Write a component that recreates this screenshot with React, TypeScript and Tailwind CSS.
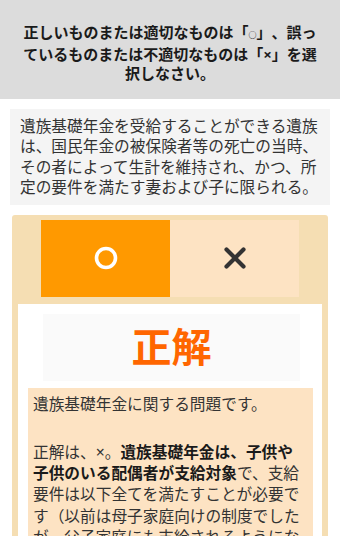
import React from 'react';

const jp = { fontFamily: '"Noto Sans", "Noto Sans CJK JP", sans-serif' };

function CircleIcon() {
  return (
    <svg width="26" height="26" viewBox="0 0 26 26">
      <circle cx="13" cy="13" r="9.5" fill="none" stroke="#fff" strokeWidth="3.6" />
    </svg>
  );
}

function CrossIcon() {
  return (
    <svg width="24" height="24" viewBox="0 0 24 24">
      <path d="M3.5 3.5 L20.5 20.5 M20.5 3.5 L3.5 20.5" stroke="#333" strokeWidth="4.2" strokeLinecap="round" />
    </svg>
  );
}

export default function App() {
  return (
    <div className="w-[340px] min-h-[536px] bg-white text-[#222] [text-spacing-trim:space-all]" style={jp}>
      {/* instruction header */}
      <div className="bg-[#dcdcdc] px-[22px] pt-[23px] pb-[15px] text-center text-[15px] font-bold leading-[19.5px] text-[#1a1a1a]">
        正しいものまたは適切なものは「<span className="text-[8px]">○</span>」、誤っているものまたは不適切なものは「×」を選択しなさい。
      </div>

      {/* question */}
      <div className="mx-[10px] mt-[10px] bg-[#f4f4f4] px-[10px] py-[7px] text-[15.7px] leading-[20.5px] text-[#333]">
        遺族基礎年金を受給することができる遺族は、国民年金の被保険者等の死亡の当時、その者によって生計を維持され、かつ、所定の要件を満たす妻および子に限られる。
      </div>

      {/* answer card */}
      <div className="mx-[12px] mt-[10px] rounded-[3px] bg-[#f5deb3] px-[6px] pt-[5px]">
        <div className="mx-auto flex h-[77px] w-[258px]">
          <button className="flex flex-1 items-center justify-center bg-[#ff9900]">
            <CircleIcon />
          </button>
          <button className="flex flex-1 items-center justify-center bg-[#fde3c3]">
            <CrossIcon />
          </button>
        </div>

        <div className="mt-[7px] bg-white pt-[10px] pb-4">
          <div className="ml-[25px] flex h-[67px] w-[257px] items-center justify-center bg-[#fafafa]">
            <span className="text-[40px] font-bold leading-none text-[#ff6600]">正解</span>
          </div>

          <div className="ml-[10px] mt-[7px] w-[285px] bg-[#fde3c3] pl-[5px] pr-[8px] pt-[6px] pb-3 text-[15.7px] leading-[21.3px] text-[#333]">
            <p>遺族基礎年金に関する問題です。</p>
            <p className="mt-[27px]">
              正解は、×。<b className="font-bold text-[#1a1a1a]">遺族基礎年金は、子供や子供のいる配偶者が支給対象</b>で、支給要件は以下全てを満たすことが必要です（以前は母子家庭向けの制度でしたが、父子家庭にも支給されるようになりました）。
            </p>
          </div>
        </div>
      </div>
    </div>
  );
}
